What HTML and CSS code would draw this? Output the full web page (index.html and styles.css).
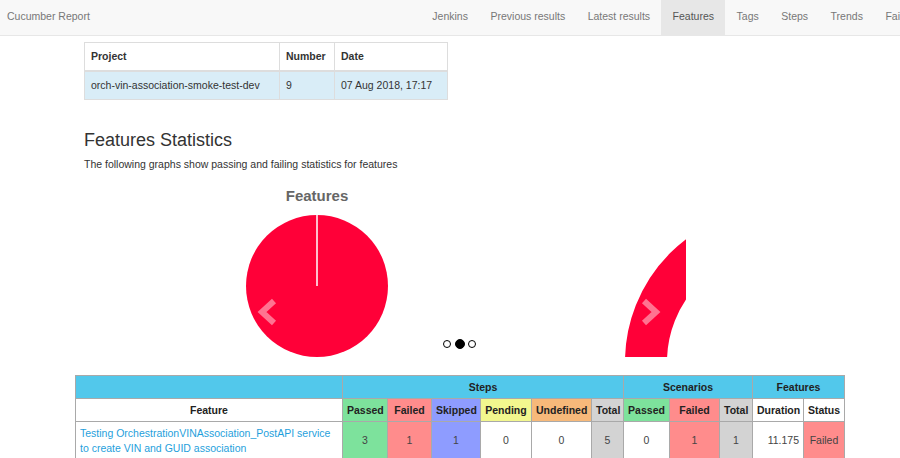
FILE: index.html
```html
<!DOCTYPE html>
<html lang="en">
<head>
<meta charset="utf-8">
<title>Cucumber Report - Features</title>
<link rel="stylesheet" href="styles.css">
</head>
<body>
<nav class="navbar">
  <a class="brand" href="#">Cucumber Report</a>
  <ul class="nav">
    <li><a href="#">Jenkins</a></li>
    <li><a href="#">Previous results</a></li>
    <li><a href="#">Latest results</a></li>
    <li class="active"><a href="#">Features</a></li>
    <li><a href="#">Tags</a></li>
    <li><a href="#">Steps</a></li>
    <li><a href="#">Trends</a></li>
    <li><a href="#">Failures</a></li>
  </ul>
</nav>

<main class="content">
  <table class="info">
    <thead>
      <tr><th class="c-project">Project</th><th class="c-number">Number</th><th class="c-date">Date</th></tr>
    </thead>
    <tbody>
      <tr class="info-row"><td>orch-vin-association-smoke-test-dev</td><td>9</td><td>07 Aug 2018, 17:17</td></tr>
    </tbody>
  </table>

  <h2 class="title">Features Statistics</h2>
  <p class="lead">The following graphs show passing and failing statistics for features</p>

  <div class="carousel">
    <div class="chart-title">Features</div>
    <svg class="charts" width="470" height="155" viewBox="0 0 470 155">
      <defs>
        <clipPath id="slideclip"><rect x="0" y="0" width="456" height="152"/></clipPath>
      </defs>
      <circle cx="87" cy="81" r="71" fill="#ff0038"/>
      <line x1="87" y1="10" x2="87" y2="81" stroke="#ffffff" stroke-width="1.5"/>
      <g clip-path="url(#slideclip)">
        <circle cx="549" cy="157" r="133" fill="none" stroke="#ff0038" stroke-width="42"/>
      </g>
      <polyline points="44,96 32,107 44,118" fill="none" stroke="#ffffff" stroke-opacity="0.45" stroke-width="6"/>
      <polyline points="414,96 426,107 414,118" fill="none" stroke="#ffffff" stroke-opacity="0.45" stroke-width="6"/>
    </svg>
    <ol class="indicators">
      <li></li>
      <li class="active"></li>
      <li></li>
    </ol>
  </div>

  <table class="stats">
    <colgroup>
      <col style="width:267px"><col style="width:45px"><col style="width:44px"><col style="width:49px"><col style="width:51px"><col style="width:60px"><col style="width:32px"><col style="width:46px"><col style="width:50px"><col style="width:33px"><col style="width:51px"><col style="width:41px">
    </colgroup>
    <thead>
      <tr class="group">
        <th></th>
        <th colspan="6">Steps</th>
        <th colspan="3">Scenarios</th>
        <th colspan="2">Features</th>
      </tr>
      <tr class="cols">
        <th class="plain">Feature</th>
        <th class="passed">Passed</th>
        <th class="failed">Failed</th>
        <th class="skipped">Skipped</th>
        <th class="pending">Pending</th>
        <th class="undefined">Undefined</th>
        <th class="total">Total</th>
        <th class="passed">Passed</th>
        <th class="failed">Failed</th>
        <th class="total">Total</th>
        <th class="plain">Duration</th>
        <th class="plain">Status</th>
      </tr>
    </thead>
    <tbody>
      <tr>
        <td class="name"><a href="#">Testing OrchestrationVINAssociation_PostAPI service to create VIN and GUID association</a></td>
        <td class="passed">3</td>
        <td class="failed">1</td>
        <td class="skipped">1</td>
        <td>0</td>
        <td>0</td>
        <td class="total">5</td>
        <td>0</td>
        <td class="failed">1</td>
        <td class="total">1</td>
        <td class="duration">11.175</td>
        <td class="failed">Failed</td>
      </tr>
    </tbody>
  </table>
</main>
</body>
</html>
```
FILE: styles.css
```css
html, body {
  margin: 0;
  padding: 0;
}
body {
  font-family: "Liberation Sans", Arial, Helvetica, sans-serif;
  font-size: 10.5px;
  line-height: 15px;
  color: #333;
  background: #fff;
  overflow: hidden;
}

/* navbar */
.navbar {
  display: flex;
  height: 35px;
  background: #f8f8f8;
  border-bottom: 1px solid #e7e7e7;
  overflow: hidden;
}
.brand {
  padding: 9px 0 0 7px;
  color: #777;
  text-decoration: none;
  flex-shrink: 0;
}
.nav {
  display: flex;
  list-style: none;
  margin: 0 -34px 0 auto;
  padding: 0;
  flex-shrink: 0;
}
.nav a {
  display: block;
  padding: 9px 11.25px 11px;
  color: #777;
  text-decoration: none;
  white-space: nowrap;
}
.nav .active a {
  background: #e7e7e7;
  color: #555;
}

/* content */
.content {
  padding-left: 84px;
}

.info {
  margin-top: 6px;
  border-collapse: collapse;
  border: 1px solid #ddd;
}
.info th, .info td {
  padding: 6px;
  border: 1px solid #ddd;
  text-align: left;
  line-height: 15px;
}
.info thead th {
  border-bottom-width: 2px;
  font-weight: bold;
}
.info .c-project { width: 182px; }
.info .c-number { width: 42px; }
.info .c-date { width: 100px; }
.info-row td {
  background: #d9edf7;
}

.title {
  margin: 30px 0 6.5px;
  font-size: 18px;
  font-weight: normal;
  line-height: 20px;
  color: #333;
}
.lead {
  margin: 0;
}

/* carousel */
.carousel {
  position: relative;
  margin: 15.5px 0 0 146px;
  width: 470px;
}
.chart-title {
  width: 174px;
  text-align: center;
  font-size: 15px;
  line-height: 18px;
  font-weight: bold;
  color: #666;
}
.charts {
  display: block;
}
.indicators {
  position: absolute;
  left: 213px;
  top: 151.5px;
  display: flex;
  align-items: center;
  gap: 3.5px;
  margin: 0;
  padding: 0;
  list-style: none;
}
.indicators li {
  width: 6px;
  height: 6px;
  border: 1px solid #000;
  border-radius: 50%;
  background: #fff;
}
.indicators li.active {
  width: 8px;
  height: 8px;
  background: #000;
}

/* stats table */
.stats {
  margin: 15px 0 0 -9px;
  width: 769px;
  table-layout: fixed;
  border-collapse: collapse;
  border: 1px solid #a9a9a9;
}
.stats th, .stats td {
  border: 1px solid #a9a9a9;
  padding: 3.5px 4px;
  line-height: 15px;
  text-align: center;
  color: #222;
}
.stats th {
  font-weight: bold;
  white-space: nowrap;
}
.stats .group th {
  background: #52c8eb;
}
.stats .cols .plain {
  background: #fff;
}
.stats .passed { background: #7de29c; }
.stats .failed { background: #ff8c8c; }
.stats .skipped { background: #8e9cff; }
.stats .pending { background: #f2f78e; }
.stats .undefined { background: #f7b97a; }
.stats .total { background: #d3d3d3; }
.stats td {
  color: #444;
}
.stats td.name {
  text-align: left;
  padding-top: 4px;
}
.stats td.name a {
  color: #1f9fdc;
  text-decoration: none;
}
.stats td.duration {
  text-align: right;
}
```
